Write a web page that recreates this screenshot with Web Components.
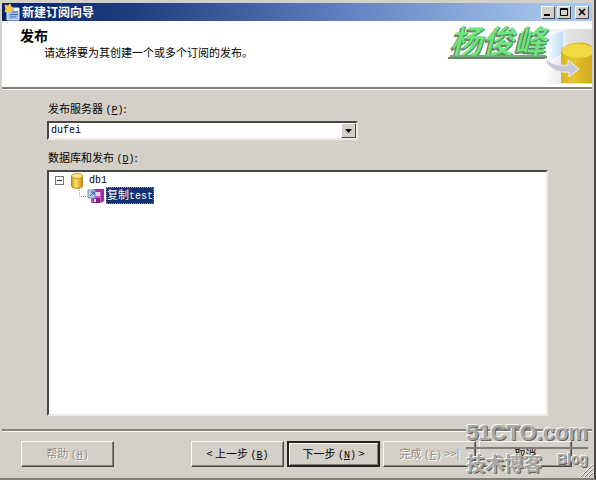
<!DOCTYPE html>
<html lang="zh-CN">
<head>
<meta charset="utf-8">
<title>新建订阅向导</title>
<style>
  html, body {
    height: 100%;
    margin: 0;
  }

  body {
    --face: #d4d0c8;
    --light: #fcfbf8;
    --shade: #84807a;
    --dark: #4a4845;
    color: #000;
    background: var(--face);
    font: 11px/14px "Noto Sans CJK SC", sans-serif;
  }
</style>
</head>
<body>
<wizard-window>
  <title-bar slot="title">新建订阅向导</title-bar>
  <wizard-header slot="header">
    发布
    <span slot="description">请选择要为其创建一个或多个订阅的发布。</span>
  </wizard-header>
  <publication-form></publication-form>
  <wizard-button slot="help" disabled>帮助 <access-key>H</access-key></wizard-button>
  <wizard-button slot="actions">&lt; 上一步 <access-key>B</access-key></wizard-button>
  <wizard-button slot="actions" default>下一步 <access-key>N</access-key> &gt;</wizard-button>
  <wizard-button slot="actions" disabled>完成 <access-key>F</access-key> &gt;&gt;|</wizard-button>
  <wizard-button slot="actions">取消</wizard-button>
</wizard-window>
<blog-mark></blog-mark>

<script>
/**
 * Define a custom element that clones the given markup into its shadow root.
 *
 * @param {string} name - Name of the element.
 * @param {string} html - Styles and markup of the element.
 * @param {Function} [setup] - Called with the element once its shadow root is filled.
 */
function define (name, html, setup) {
  const template = document.createElement('template')
  template.innerHTML = html

  customElements.define(name,
    class extends HTMLElement {
      /**
       * Create instance and attach shadowDOM.
       */
      constructor () {
        super()

        this.attachShadow({ mode: 'open' })
          .appendChild(template.content.cloneNode(true))

        if (setup) {
          setup(this)
        }
      }
    })
}

define('access-key', `
  <style>
    :host {
      font: 10px/14px "Liberation Mono", monospace;
    }
  </style>(<u><slot></slot></u>)`)

define('wizard-window', `
  <style>
    :host {
      box-sizing: border-box;
      display: flex;
      flex-direction: column;
      min-height: 100%;
      padding: 3px 2px 0;
      border-right: 2px solid var(--dark);
      border-bottom: 2px solid var(--shade);
      background: var(--face);
    }

    main {
      flex: 1;
      display: flex;
      flex-direction: column;
      padding: 12px 44px 13px 45px;
      border-top: 2px solid var(--shade);
      box-shadow: inset 0 1px var(--light);
    }

    footer {
      display: flex;
      justify-content: space-between;
      padding: 10px 20px 11px 19px;
      border-top: 2px solid var(--shade);
      box-shadow: inset 0 1px var(--light);
    }

    .actions {
      display: flex;
      gap: 3px;
    }
  </style>
  <slot name="title"></slot>
  <slot name="header"></slot>
  <main><slot></slot></main>
  <footer>
    <slot name="help"></slot>
    <div class="actions"><slot name="actions"></slot></div>
  </footer>
`)

define('title-bar', `
  <style>
    :host {
      display: flex;
      align-items: center;
      height: 18px;
      padding: 0 3px 0 2px;
      color: #fff;
      background: linear-gradient(to right, #0a246a, #1d3d80 22%, #5574b8 52%, #9dbfe8 90%, #a6caf0);
      font-size: 12px;
      font-weight: bold;
    }

    .icon {
      width: 16px;
      height: 17px;
      margin-right: 2px;
    }

    .caption {
      flex: 1;
    }

    .controls {
      display: flex;
      gap: 2px;
    }

    button {
      width: 14px;
      height: 13px;
      padding: 0;
      border: 1px solid;
      border-color: var(--light) var(--dark) var(--dark) var(--light);
      background: var(--face);
    }

    button:last-child {
      margin-left: 2px;
    }

    button svg {
      display: block;
      width: 12px;
      height: 11px;
      fill: none;
      stroke: #000;
    }
  </style>
  <svg class="icon" viewBox="0 0 16 17">
    <path d="M5 4h10v12H3V8z" fill="#9cc4ee" stroke="#dcecff"/>
    <path d="M6 8h8M6 10.500h8M6 13h6" stroke="#476fb0"/>
    <path d="M10 4h5v3h-5z" fill="#e9f3ff"/>
    <path d="M1 1l3 1 2-2 1 3 2 1-2 2v3L4 7 1 8l1-3z" fill="#f5cc38" stroke="#f5cc38"/>
  </svg>
  <span class="caption"><slot></slot></span>
  <div class="controls">
    <button aria-label="最小化"><svg viewBox="0 0 12 11"><path d="M2 8h6" stroke-width="2"/></svg></button>
    <button aria-label="最大化"><svg viewBox="0 0 12 11"><path d="M2.500 1.500h7v7h-7zM2 2.500h8"/></svg></button>
    <button aria-label="关闭"><svg viewBox="0 0 12 11"><path d="M3 2l6 6M9 2L3 8" stroke-width="1.600"/></svg></button>
  </div>
`)

define('wizard-header', `
  <style>
    :host {
      display: flex;
      height: 66px;
      background: #fff;
    }

    .text {
      flex: 1;
      padding: 4px 0 0 18px;
    }

    h1 {
      margin: 0;
      font-size: 14px;
      line-height: 20px;
    }

    p {
      margin: 0 0 0 24px;
      line-height: 14px;
    }

    .art {
      display: flex;
      align-items: flex-start;
    }

    .signature {
      z-index: 1;
      margin-right: -2px;
      color: #6de77c;
      font-size: 32px;
      font-style: italic;
      font-weight: 500;
      line-height: 36px;
      text-shadow: 1px 1px #52965d, -1px 2px #707c70, -2px 2px #777;
      text-decoration: underline 2px #75a578;
      text-underline-offset: 2px;
    }

    svg {
      width: 48px;
      height: 58px;
      margin-top: 6px;
    }
  </style>
  <div class="text">
    <h1><slot></slot></h1>
    <p><slot name="description"></slot></p>
  </div>
  <div class="art">
    <span class="signature">杨俊峰</span>
    <svg viewBox="0 0 48 58">
      <defs>
        <linearGradient id="haze"><stop offset="0" stop-color="#fff"/><stop offset=".5" stop-color="#e6e3e6"/><stop offset="1" stop-color="#d9d6da"/></linearGradient>
        <linearGradient id="gold"><stop offset="0" stop-color="#d9b51f"/><stop offset=".4" stop-color="#e7c62d"/><stop offset="1" stop-color="#cfa81a"/></linearGradient>
        <linearGradient id="glass"><stop offset="0" stop-color="#f5faff"/><stop offset="1" stop-color="#b9daf1"/></linearGradient>
      </defs>
      <path d="M0 2h48v55H0z" fill="url(#haze)"/>
      <path d="M4 8l16-5v24L4 35z" fill="url(#glass)" stroke="#fff"/>
      <path d="M17 26c0-13 31-13 31-5v35H17z" fill="url(#gold)"/>
      <ellipse cx="34" cy="24" rx="16" ry="7" fill="#f0d943"/>
      <path d="M1 31c4 12 13 15 24 14v5l10-8-11-9v5c-10 1-18-1-23-7z" fill="#c8c7d5" stroke="#f1f0f7"/>
    </svg>
  </div>
`)

define('publication-form', `
  <style>
    :host {
      flex: 1;
      display: flex;
      flex-direction: column;
      align-items: stretch;
    }

    label, .label {
      margin-left: 1px;
      line-height: 14px;
    }

    .field, publication-tree {
      border: 2px solid;
      border-color: var(--dark) #eeebe6 #eeebe6 var(--dark);
      background: #fff;
    }

    .field {
      box-sizing: border-box;
      display: grid;
      width: 62%;
      height: 19px;
      margin: 3px 0 10px;
    }

    select, .arrow {
      grid-area: 1 / 1;
    }

    select {
      appearance: none;
      width: 100%;
      padding: 0 18px 0 2px;
      border: 0;
      color: #000;
      background: none;
      font: 10px/14px "Liberation Mono", monospace;
    }

    .arrow {
      justify-self: end;
      display: grid;
      place-items: center;
      width: 13px;
      border: 1px solid;
      border-color: var(--light) var(--dark) var(--dark) var(--light);
      background: var(--face);
      pointer-events: none;
    }

    publication-tree {
      flex: 1;
      margin-top: 3px;
    }
  </style>
  <label for="publisher">发布服务器 <access-key>P</access-key>:</label>
  <div class="field">
    <select id="publisher"><option>dufei</option></select>
    <span class="arrow"><svg width="7" height="4"><path d="M0 0h7L3.500 4z"/></svg></span>
  </div>
  <span class="label" id="tree-label">数据库和发布 <access-key>D</access-key>:</span>
  <publication-tree aria-labelledby="tree-label"></publication-tree>
`)

define('publication-tree', `
  <style>
    :host {
      display: block;
    }

    ul {
      margin: 0;
      padding: 0;
      list-style: none;
    }

    ul ul {
      padding-left: 24px;
    }

    .row {
      display: flex;
      align-items: center;
      height: 15px;
    }

    ul.root {
      padding: 1px 0 0 6px;
    }

    .latin {
      font: 10px/14px "Liberation Mono", monospace;
    }

    .toggle {
      width: 9px;
      height: 9px;
      padding: 0;
      border: 1px solid #77746f;
      background: linear-gradient(#333, #333) center / 5px 1px no-repeat #fff;
    }

    .database {
      width: 14px;
      height: 16px;
      margin: 0 5px 0 6px;
    }

    .publication {
      width: 25px;
      height: 16px;
      margin-right: 2px;
    }

    .selected {
      padding: 0 1px;
      color: #fff;
      background: #12306f;
      outline: 1px dotted #8795af;
      outline-offset: -1px;
    }
  </style>
  <ul class="root" role="tree">
    <li role="treeitem" aria-expanded="true">
      <div class="row">
        <button class="toggle" aria-label="折叠"></button>
        <svg class="database" viewBox="0 0 14 16">
          <defs><linearGradient id="gold"><stop offset="0" stop-color="#d99b18"/><stop offset=".4" stop-color="#ffe268"/><stop offset="1" stop-color="#c98912"/></linearGradient></defs>
          <path d="M1.500 3v10c0 3 11 3 11 0V3z" fill="url(#gold)" stroke="#b98924"/>
          <ellipse cx="7" cy="3" rx="5.500" ry="2.500" fill="#ffe989" stroke="#c99b31"/>
        </svg>
        <span class="latin">db1</span>
      </div>
      <ul role="group">
        <li role="treeitem" aria-selected="true">
          <div class="row">
            <svg class="publication" viewBox="0 0 25 16">
              <path d="M.500 0v8.500H9" fill="none" stroke="#aaa" stroke-dasharray="1 1"/>
              <path d="M12 3l3-2h10v12l-3 2H12z" fill="#a42ba5"/>
              <path d="M12 4h10v11H12z" fill="#c65cc8"/>
              <path d="M14 4h7v4h-7z" fill="#f0c9ef"/>
              <path d="M14 10h7v5h-7z" fill="#832085"/>
              <path d="M15 11h2v3h-2z" fill="#f2d9f3"/>
              <path d="M9 2h7v8H9z" fill="#b6cfe8" stroke="#7893b4"/>
              <path d="M11 8l4-4M12 4h3v3" fill="none" stroke="#35599a"/>
            </svg>
            <span class="selected">复制<span class="latin">test</span></span>
          </div>
        </li>
      </ul>
    </li>
  </ul>
`)

define('wizard-button', `
  <style>
    :host {
      display: block;
    }

    button {
      box-sizing: border-box;
      width: 93px;
      height: 26px;
      padding: 0;
      border: 1px solid;
      border-color: var(--light) var(--dark) var(--dark) var(--light);
      box-shadow: inset -1px -1px var(--shade);
      color: #000;
      background: var(--face);
      font: inherit;
      white-space: nowrap;
    }

    :host([default]) button {
      border: 2px solid #252321;
      box-shadow: inset 1px 1px var(--light), inset -1px -1px var(--shade);
    }

    button:disabled {
      color: #918d87;
      text-shadow: 1px 1px #fff;
    }
  </style>
  <button><slot></slot></button>
`, host => {
  host.shadowRoot.querySelector('button').disabled = host.hasAttribute('disabled')
})

// Blog stamp and the resize grip, floating over the window's lower right corner.
define('blog-mark', `
  <style>
    :host {
      position: absolute;
      right: 3px;
      bottom: 3px;
      display: flex;
      align-items: flex-end;
      color: #aaa8a5;
      pointer-events: none;
      text-shadow: -1px -1px #f7f6f4, 1px 1px #65625e;
    }

    .site {
      padding-bottom: 2px;
      font: bold 22px/24px "Liberation Sans", sans-serif;
      border-bottom: 2px solid #807d79;
    }

    .name {
      display: flex;
      justify-content: space-between;
      align-items: flex-start;
      font-size: 19px;
      font-weight: bold;
      line-height: 28px;
    }

    .blog {
      font: bold 14px/20px "Liberation Sans", sans-serif;
    }

    .grip {
      width: 13px;
      height: 13px;
      margin-left: -8px;
    }
  </style>
  <div>
    <div class="site">51CTO.com</div>
    <div class="name"><span>技术博客</span><span class="blog">Blog</span></div>
  </div>
  <svg class="grip" viewBox="0 0 13 13" fill="none">
    <path d="M1 13L13 1M5 13l8-8M9 13l4-4" stroke="#7c7974"/>
    <path d="M0 13L13 0M4 13l9-9M8 13l5-5" stroke="#fff"/>
  </svg>
`)
</script>
</body>
</html>
